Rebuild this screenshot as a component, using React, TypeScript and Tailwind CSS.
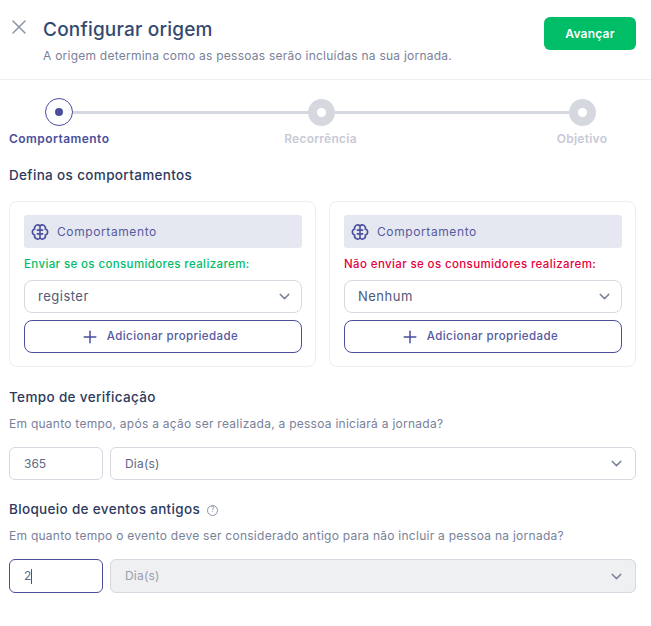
import React from "react";
import { ChevronDown, Plus, X } from "lucide-react";

const font = { fontFamily: "Inter, sans-serif" };

const steps = [
  { id: 1, label: "Comportamento" },
  { id: 2, label: "Recorrência" },
  { id: 3, label: "Objetivo" },
];

const BrainIcon = () => {
  return (
    <svg viewBox="0 0 24 24" className="w-[18px] h-[18px]" fill="none" stroke="currentColor" strokeWidth={2.1} strokeLinecap="round" strokeLinejoin="round">
      <path d="M12 4A4.1 4.1 0 0 1 19 8A4.1 4.1 0 0 1 19 16A4.1 4.1 0 0 1 12 20A4.1 4.1 0 0 1 5 16A4.1 4.1 0 0 1 5 8A4.1 4.1 0 0 1 12 4Z" />
      <path d="M12 4v16M12 9.5h3.5M12 14.5h3.5M12 9.5H8.5M12 14.5H8.5" />
    </svg>
  );
};

const Stepper = () => {
  return (
    <div className="px-[9px] pt-[18px]">
      <div className="flex items-center pl-[36px] pr-[46px]">
        <div className="flex items-center justify-center w-[28px] h-[28px] rounded-full border border-[#4a4f9c] bg-white">
          <div className="w-[8px] h-[8px] rounded-full bg-[#4a4f9c]" />
        </div>
        <div className="flex-1 h-[3px] bg-[#d6d8e0]" />
        <div className="flex items-center justify-center w-[27px] h-[27px] rounded-full bg-[#d6d8e0]">
          <div className="w-[9px] h-[9px] rounded-full bg-white" />
        </div>
        <div className="flex-1 h-[3px] bg-[#d6d8e0]" />
        <div className="flex items-center justify-center w-[27px] h-[27px] rounded-full bg-[#d6d8e0]">
          <div className="w-[9px] h-[9px] rounded-full bg-white" />
        </div>
      </div>
      <div className="flex gap-[161.5px] mt-[4px]">
        {steps.map((item) => {
          return (
            <span
              key={item.id}
              className={`w-[100px] text-center whitespace-nowrap text-[12px] leading-[18px] font-semibold ${
                item.id === 1 ? "text-[#4a4f9c] tracking-[0.45px]" : "text-[#c8cad6] tracking-[0.25px]"
              }`}
            >
              {item.label}
            </span>
          );
        })}
      </div>
    </div>
  );
};

const BehaviorCard = ({
  title,
  titleColor,
  value,
}: {
  title: string;
  titleColor: string;
  value: string;
}) => {
  return (
    <div className="w-[307px] h-[166px] rounded-[8px] border border-[#eceef2] bg-white pl-[14px] pr-[13px] pt-[13px]">
      <div className="flex items-center h-[33px] rounded-[3px] bg-[#e6e8f1] pl-[7px] text-[#4a4f9c]">
        <BrainIcon />
        <span className="ml-[8px] text-[12px] tracking-[0.6px] text-[#555aa0]">Comportamento</span>
      </div>
      <p className={`mt-[8px] h-[24px] text-[11.5px] leading-[16px] font-medium tracking-[0.38px] whitespace-nowrap ${titleColor}`}>
        {title}
      </p>
      <div className="flex items-center justify-between h-[33px] rounded-[8px] border border-[#d6d8e0] pl-[13px] pr-[8px]">
        <span className="text-[13px] text-[#4e5a78] tracking-[0.5px]">{value}</span>
        <ChevronDown className="w-[17px] h-[17px] text-[#7d8599]" strokeWidth={2} />
      </div>
      <button className="flex items-center justify-center w-full h-[33px] mt-[7px] pr-[8px] rounded-[8px] border border-[#4a4f9c] bg-white text-[#4a4f9c]">
        <Plus className="w-[20px] h-[20px]" strokeWidth={1.8} />
        <span className="ml-[7px] text-[11.5px] font-medium tracking-[0.42px] text-[#555aa0]">Adicionar propriedade</span>
      </button>
    </div>
  );
};

export default function App() {
  return (
    <div className="w-[651px] h-[626px] bg-white overflow-hidden" style={font}>
      <header className="flex justify-between h-[80px] border-b border-[#eeeff2] pl-[7px] pr-[15px]">
        <X className="w-[24px] h-[24px] mt-[15px] text-[#8b92a3]" strokeWidth={1.5} />
        <div className="flex-1 ml-[12px] pt-[17px]">
          <h1 className="text-[19px] leading-[26px] font-medium tracking-[0.2px] text-[#334a70]">Configurar origem</h1>
          <p className="mt-[4px] text-[12px] leading-[18px] tracking-[0.24px] text-[#79819a]">
            A origem determina como as pessoas serão incluídas na sua jornada.
          </p>
        </div>
        <button className="w-[92px] h-[33px] mt-[17px] rounded-[6px] bg-[#00bd68] text-white text-[12px] font-semibold tracking-[0.2px]">
          Avançar
        </button>
      </header>
      <Stepper />
      <section className="pl-[9px] pr-[15px]">
        <h2 className="mt-[17px] text-[13.5px] leading-[20px] font-medium tracking-[0.35px] text-[#2d3a5e]">
          Defina os comportamentos
        </h2>
        <div className="flex justify-between mt-[16px]">
          <BehaviorCard title="Enviar se os consumidores realizarem:" titleColor="text-[#00bd68]" value="register" />
          <BehaviorCard title="Não enviar se os consumidores realizarem:" titleColor="text-[#e6003d]" value="Nenhum" />
        </div>

        <h2 className="mt-[20px] text-[13.5px] leading-[20px] font-medium tracking-[0.35px] text-[#2d3a5e]">
          Tempo de verificação
        </h2>
        <p className="mt-[8px] text-[12px] leading-[18px] tracking-[0.26px] text-[#79819a]">
          Em quanto tempo, após a ação ser realizada, a pessoa iniciará a jornada?
        </p>
        <div className="flex gap-[7px] mt-[14px]">
          <div className="flex items-center w-[94px] h-[33px] rounded-[6px] border border-[#d6d8e0] pl-[14px] text-[12px] text-[#5e6984]">365</div>
          <div className="flex flex-1 items-center justify-between h-[33px] rounded-[6px] border border-[#d6d8e0] pl-[14px] pr-[10px]">
            <span className="text-[12px] text-[#5e6984] tracking-[0.2px]">Dia(s)</span>
            <ChevronDown className="w-[17px] h-[17px] text-[#7d8599]" strokeWidth={2} />
          </div>
        </div>

        <div className="flex items-center mt-[19px] h-[20px]">
          <h2 className="text-[13.5px] leading-[20px] font-medium tracking-[0.33px] text-[#2d3a5e]">Bloqueio de eventos antigos</h2>
          <span className="flex items-center justify-center ml-[7px] mt-[3px] w-[11px] h-[11px] rounded-full border border-[#8b92a3] text-[7px] text-[#8b92a3]">?</span>
        </div>
        <p className="mt-[8px] text-[12px] leading-[18px] tracking-[0.26px] text-[#79819a]">
          Em quanto tempo o evento deve ser considerado antigo para não incluir a pessoa na jornada?
        </p>
        <div className="flex gap-[7px] mt-[14px]">
          <div className="flex items-center w-[94px] h-[34px] rounded-[6px] border border-[#4a4f9c] pl-[14px] text-[12px] text-[#5e6984]">
            2<span className="w-px h-[15px] bg-[#4a4f9c]" />
          </div>
          <div className="flex flex-1 items-center justify-between h-[34px] rounded-[6px] border border-[#d6d8e0] bg-[#eff0f2] pl-[14px] pr-[10px]">
            <span className="text-[12px] text-[#9a9fae] tracking-[0.2px]">Dia(s)</span>
            <ChevronDown className="w-[17px] h-[17px] text-[#7d8599]" strokeWidth={2} />
          </div>
        </div>
      </section>
    </div>
  );
}
